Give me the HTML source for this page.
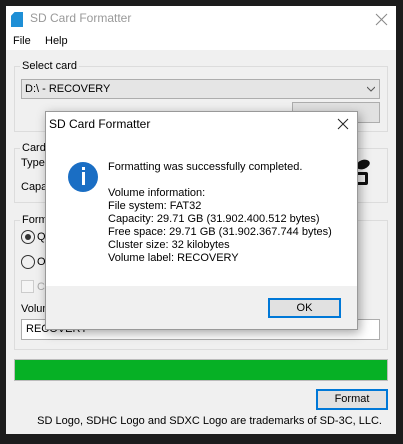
<!DOCTYPE html>
<html><head><style>
*{margin:0;padding:0;box-sizing:border-box}
body{width:403px;height:444px;background:#1c1c1c;position:relative;overflow:hidden;font-family:"Liberation Sans",sans-serif;font-size:11px;color:#000}
.a{position:absolute}
.t{position:absolute;white-space:nowrap;line-height:13px}
.g{position:absolute;border:1px solid #dcdcdc}
.lbl{position:absolute;background:#f0f0f0;padding:0 2px;line-height:13px}
</style></head><body>
<div class="a" style="left:6px;top:6px;width:390px;height:428px;background:#f0f0f0"></div>
<div class="a" style="left:6px;top:6px;width:390px;height:44px;background:#fff"></div>
<div class="a" style="left:11px;top:12px;width:12px;height:15px;background:#1e8fd6;clip-path:polygon(30% 0,100% 0,100% 100%,0 100%,0 25%)"></div>
<div class="t" style="left:30px;top:12px;color:#999;font-size:12px">SD Card Formatter</div>
<svg class="a" style="left:375px;top:13px" width="13" height="13"><path d="M1 1L12 12M12 1L1 12" stroke="#888" stroke-width="1"/></svg>
<div class="t" style="left:13px;top:35px">File</div>
<div class="t" style="left:45px;top:35px">Help</div>

<div class="g" style="left:14px;top:66px;width:374px;height:66px"></div>
<div class="lbl" style="left:20px;top:60px">Select card</div>
<div class="a" style="left:21px;top:79px;width:359px;height:20px;background:#e5e5e5;border:1px solid #adadad"></div>
<div class="t" style="left:25px;top:83px">D:\ - RECOVERY</div>
<svg class="a" style="left:367px;top:86px" width="8" height="6"><path d="M0 1L4 5L8 1" stroke="#555" fill="none"/></svg>
<div class="a" style="left:292px;top:102px;width:88px;height:21px;background:#e1e1e1;border:1px solid #adadad"></div>

<div class="g" style="left:14px;top:148px;width:374px;height:55px"></div>
<div class="lbl" style="left:20px;top:142px">Card</div>
<div class="t" style="left:21px;top:157px">Type</div>
<div class="t" style="left:21px;top:181px">Capa</div>
<div class="a" style="left:356px;top:160px;width:14px;height:9px;background:#111;border-radius:50%;transform:rotate(-20deg)"></div>
<div class="a" style="left:354px;top:172px;width:14px;height:13px;border:3px solid #111;border-radius:2px"></div>

<div class="g" style="left:14px;top:220px;width:374px;height:130px"></div>
<div class="lbl" style="left:20px;top:214px">Form</div>
<div class="a" style="left:21px;top:230px;width:14px;height:14px;border:1px solid #333;border-radius:50%"></div>
<div class="a" style="left:25px;top:234px;width:6px;height:6px;background:#333;border-radius:50%"></div>
<div class="t" style="left:37px;top:231px">Q</div>
<div class="a" style="left:21px;top:255px;width:14px;height:14px;border:1px solid #333;border-radius:50%"></div>
<div class="t" style="left:37px;top:256px">O</div>
<div class="a" style="left:21px;top:280px;width:13px;height:13px;border:1px solid #ccc;background:#f5f5f5"></div>
<div class="t" style="left:37px;top:281px;color:#aaa">Cl</div>
<div class="t" style="left:21px;top:303px">Volum</div>
<div class="a" style="left:21px;top:319px;width:359px;height:21px;background:#fff;border:1px solid #adadad"></div>
<div class="t" style="left:26px;top:323px">RECOVERY</div>

<div class="a" style="left:14px;top:359px;width:374px;height:22px;background:#06b025;border:1px solid #bcbcbc"></div>
<div class="a" style="left:316px;top:389px;width:72px;height:21px;background:#e1e1e1;border:2px solid #0078d7"></div>
<div class="t" style="left:316px;top:393px;width:72px;text-align:center">Format</div>
<div class="t" style="right:21px;top:415px;text-align:right">SD Logo, SDHC Logo and SDXC Logo are trademarks of SD-3C, LLC.</div>

<div class="a" style="left:45px;top:111px;width:313px;height:219px;background:#fff;border:1px solid #999;box-shadow:2px 3px 10px rgba(0,0,0,.35)"></div>
<div class="a" style="left:46px;top:286px;width:311px;height:43px;background:#f0f0f0"></div>
<div class="t" style="left:49px;top:118px;font-size:12px">SD Card Formatter</div>
<svg class="a" style="left:337px;top:118px" width="12" height="12"><path d="M1 1L11 11M11 1L1 11" stroke="#222" stroke-width="1"/></svg>
<div class="a" style="left:68px;top:162px;width:30px;height:30px;background:#1a6ec4;border-radius:50%"></div>
<div class="a" style="left:82px;top:167px;width:2.5px;height:3px;background:#fff"></div>
<div class="a" style="left:82px;top:172px;width:2.5px;height:13px;background:#fff"></div>
<div class="t" style="left:108px;top:161px">Formatting was successfully completed.</div>
<div class="t" style="left:108px;top:187px;line-height:13px">Volume information:<br>File system: FAT32<br>Capacity: 29.71 GB (31.902.400.512 bytes)<br>Free space: 29.71 GB (31.902.367.744 bytes)<br>Cluster size: 32 kilobytes<br>Volume label: RECOVERY</div>
<div class="a" style="left:268px;top:298px;width:73px;height:20px;background:#e1e1e1;border:2px solid #0078d7"></div>
<div class="t" style="left:268px;top:302px;width:73px;text-align:center">OK</div>
</body></html>
